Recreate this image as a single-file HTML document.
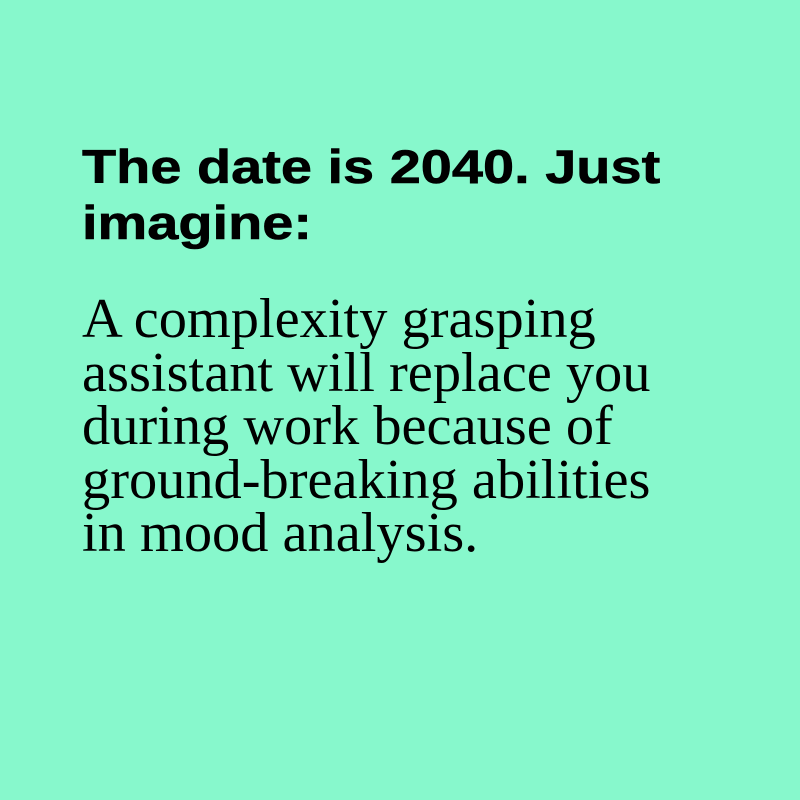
<!DOCTYPE html>
<html><head><meta charset="utf-8"><style>
html,body{margin:0;padding:0;width:800px;height:800px;background:#87f8cc;overflow:hidden}
.h{position:absolute;left:82px;top:139px;font-family:"Liberation Sans",sans-serif;font-weight:bold;font-size:47px;line-height:56px;color:#000;white-space:nowrap;transform:scaleX(1.19);transform-origin:0 0;-webkit-text-stroke:0.6px #000}
.b{position:absolute;left:82px;top:293px;font-family:"Liberation Serif",serif;font-size:56.4px;line-height:53.5px;color:#000;white-space:nowrap}
</style></head><body>
<div class="h">The date is 2040. Just<br>imagine:</div>
<div class="b">A complexity grasping<br>assistant will replace you<br>during work because of<br>ground-breaking abilities<br>in mood analysis.</div>
</body></html>
